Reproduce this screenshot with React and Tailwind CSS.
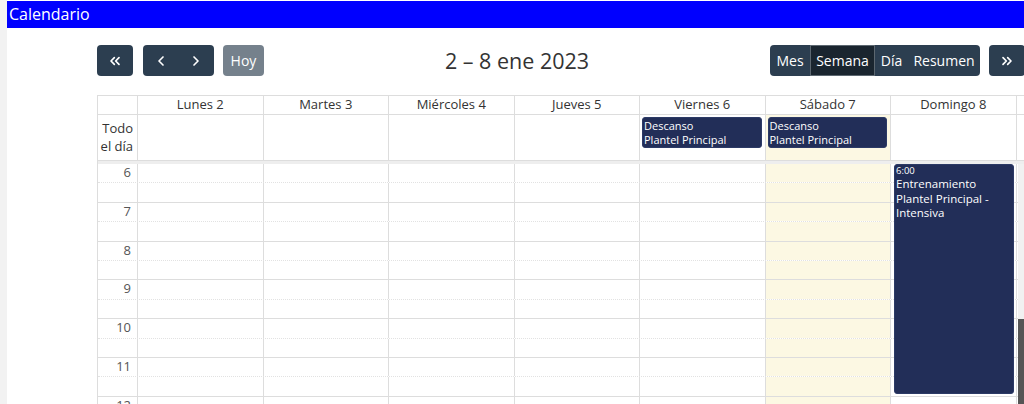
import React from 'react';
import { ChevronsLeft, ChevronsRight, ChevronLeft, ChevronRight } from 'lucide-react';

const days = [
  { name: 'Lunes 2' },
  { name: 'Martes 3' },
  { name: 'Miércoles 4' },
  { name: 'Jueves 5' },
  { name: 'Viernes 6', allDay: true },
  { name: 'Sábado 7', allDay: true, today: true },
  { name: 'Domingo 8' },
];

const hours = [6, 7, 8, 9, 10, 11, 12, 13];

const DarkBtn = ({ children, className = '' }) => (
  <button className={`h-[31px] bg-[#2c3e50] text-white text-[14px] flex items-center justify-center ${className}`}>
    {children}
  </button>
);

const AllDayEvent = () => (
  <div className="mt-[2px] ml-[2px] mr-[3px] h-[31px] rounded-[3px] bg-[#222e58] border border-[#2c3a66] px-[1px] text-white text-[11px] leading-[14px] pt-px">
    <div>Descanso</div>
    <div>Plantel Principal</div>
  </div>
);

export default function App() {
  return (
    <div className="flex h-[404px] overflow-hidden bg-white text-[#333]" style={{ fontFamily: '"Open Sans", "Noto Sans", sans-serif' }}>
      <div className="w-[7px] shrink-0 bg-[#f2f2f2]" />
      <div className="flex-1 min-w-0">
        <div className="mt-px h-[27px] bg-[#0000ff] text-white text-[16px] leading-[27px] pl-[2px]">Calendario</div>

        <div className="pl-[90px] pt-[17px]">
          <div className="w-[928px]">
            {/* toolbar */}
            <div className="flex items-center justify-between h-[31px]">
              <div className="flex items-center">
                <DarkBtn className="w-[36px] rounded-[4px]">
                  <ChevronsLeft size={16} strokeWidth={2.5} />
                </DarkBtn>
                <div className="flex ml-[10px] rounded-[4px] overflow-hidden">
                  <DarkBtn className="w-[35px]">
                    <ChevronLeft size={16} strokeWidth={2.5} />
                  </DarkBtn>
                  <DarkBtn className="w-[36px]">
                    <ChevronRight size={16} strokeWidth={2.5} />
                  </DarkBtn>
                </div>
                <DarkBtn className="w-[41px] ml-[9px] rounded-[4px] opacity-65">Hoy</DarkBtn>
              </div>
              <h2 className="text-[21.5px] leading-none text-[#333]">2 – 8 ene 2023</h2>
              <div className="flex items-center">
                <div className="flex rounded-[4px] overflow-hidden">
                  <DarkBtn className="w-[40px]">Mes</DarkBtn>
                  <DarkBtn className="w-[65px] !bg-[#1a252f] border border-[#5c6770]">Semana</DarkBtn>
                  <DarkBtn className="w-[33px]">Día</DarkBtn>
                  <DarkBtn className="w-[72px]">Resumen</DarkBtn>
                </div>
                <DarkBtn className="w-[36px] ml-[9px] rounded-[4px]">
                  <ChevronsRight size={16} strokeWidth={2.5} />
                </DarkBtn>
              </div>
            </div>

            {/* calendar table */}
            <div className="mt-[19px] border-l border-t border-[#ddd]">
              {/* header */}
              <div className="flex h-[19px] border-b border-[#ddd] text-[13px] leading-[17px]">
                <div className="w-[40px] shrink-0 border-r border-[#ddd]" />
                {days.map((d) => (
                  <div key={d.name} className="w-[125.5px] shrink-0 border-r border-[#ddd] text-center">
                    {d.name}
                  </div>
                ))}
                <div className="flex-1" />
              </div>

              {/* all day row */}
              <div className="flex h-[45px]">
                <div className="w-[40px] shrink-0 border-r border-[#ddd] text-right pr-[4px] pt-[4px] text-[13px] leading-[18px]">
                  Todo
                  <br />
                  el día
                </div>
                {days.map((d) => (
                  <div
                    key={d.name}
                    className={`w-[125.5px] shrink-0 border-r border-[#ddd] ${d.today ? 'bg-[#fcf8e3]' : ''}`}
                  >
                    {d.allDay && <AllDayEvent />}
                  </div>
                ))}
                <div className="flex-1" />
              </div>

              <div className="h-[4px] bg-[#eeeeee] border-t border-[#ddd]" />

              {/* time grid */}
              <div className="flex">
                <div className="relative w-[919.5px] shrink-0">
                  {hours.map((h) => (
                    <React.Fragment key={h}>
                      <div className="flex h-[19.4px] border-b border-dotted border-[#e2e2e2]">
                        <div className="w-[40px] shrink-0 border-r border-[#ddd] text-right pr-[6px] text-[13px] leading-[17px] text-[#555]">
                          {h}
                        </div>
                        {days.map((d) => (
                          <div key={d.name} className={`w-[125.5px] shrink-0 border-r border-[#ddd] ${d.today ? 'bg-[#fcf8e3]' : ''}`} />
                        ))}
                      </div>
                      <div className="flex h-[19.4px] border-b border-[#ddd]">
                        <div className="w-[40px] shrink-0 border-r border-[#ddd]" />
                        {days.map((d) => (
                          <div key={d.name} className={`w-[125.5px] shrink-0 border-r border-[#ddd] ${d.today ? 'bg-[#fcf8e3]' : ''}`} />
                        ))}
                      </div>
                    </React.Fragment>
                  ))}

                  {/* Domingo event */}
                  <div className="absolute top-0 left-[796px] w-[120px] h-[230px] rounded-[3px] bg-[#222e58] border border-[#2c3a66] px-[1px] text-white">
                    <div className="text-[9.5px] leading-[12px]">6:00</div>
                    <div className="text-[11.5px] leading-[14.5px]">
                      Entrenamiento
                      <br />
                      Plantel Principal -
                      <br />
                      Intensiva
                    </div>
                  </div>
                </div>

                {/* scrollbar */}
                <div className="flex-1 flex flex-col bg-[#f1f1f1]">
                  <div className="h-[155px]" />
                  <div className="flex-1 bg-[#555555]" />
                </div>
              </div>
            </div>
          </div>
        </div>
      </div>
    </div>
  );
}
